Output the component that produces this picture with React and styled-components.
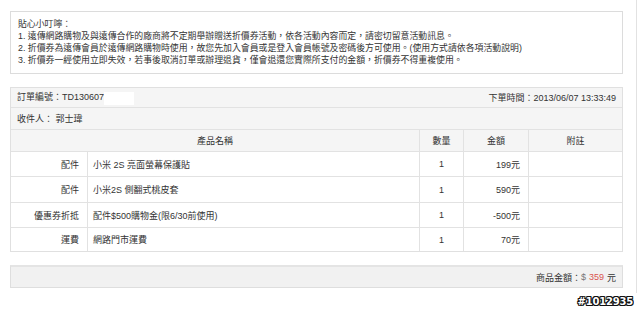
import React from "react";
import styled, { createGlobalStyle } from "styled-components";

const GlobalStyle = createGlobalStyle`
  html, body {
    margin: 0;
    padding: 0;
    background: #ffffff;
  }
  body {
    font-family: "Liberation Sans", "Noto Sans CJK TC", sans-serif;
    color: #333333;
  }
`;

const Screen = styled.div`
  position: relative;
  width: 640px;
  height: 311px;
  overflow: hidden;
`;

const Page = styled.div`
  box-sizing: border-box;
  width: 637px;
  padding: 11px 13px 5px 10px;
  border-right: 1px solid #e2e2e2;
  display: flex;
  flex-direction: column;
`;

const Notice = styled.div`
  border: 1px solid #dcdcdc;
  padding: 6px 7px 7px;
  font-size: 8.9px;
  line-height: 12px;
  color: #333333;
`;

const NoticeLine = styled.div`
  white-space: nowrap;
`;

const OrderTable = styled.div`
  margin-top: 13px;
  border: 1px solid #e0e0e0;
  font-size: 9px;
  color: #333333;
`;

const InfoRow = styled.div`
  display: flex;
  align-items: center;
  justify-content: space-between;
  height: ${(p) => p.$h}px;
  padding: 0 6px 0 6px;
  background: #f5f5f5;
  border-bottom: 1px solid #e2e2e2;
`;

const Label = styled.span`
  white-space: nowrap;
`;

const Redacted = styled.span`
  display: inline-block;
  width: 30px;
  height: 13px;
  background: #ffffff;
  vertical-align: middle;
`;

const GridRow = styled.div`
  display: grid;
  grid-template-columns: 76px 332px 44px 65px 1fr;
  height: ${(p) => p.$h}px;
  background: ${(p) => (p.$head ? "#f5f5f5" : "#ffffff")};
  border-bottom: ${(p) => (p.$last ? "none" : "1px solid #e2e2e2")};
`;

const Cell = styled.div`
  display: flex;
  align-items: center;
  justify-content: ${(p) =>
    p.$align === "right" ? "flex-end" : p.$align === "center" ? "center" : "flex-start"};
  padding: 0 ${(p) => (p.$align === "right" ? "8px" : "5px")};
  border-left: ${(p) => (p.$first ? "none" : "1px solid #e2e2e2")};
  grid-column: ${(p) => (p.$span ? `span ${p.$span}` : "auto")};
  white-space: nowrap;
  overflow: hidden;
`;

const TotalBar = styled.div`
  margin-top: 13px;
  height: 20px;
  border: 1px solid #dedede;
  border-top: 2px solid #e4e4e4;
  background: #f1f1f1;
  display: flex;
  align-items: center;
  justify-content: flex-end;
  padding-right: 6px;
  font-size: 9px;
  color: #333333;
`;

const Dollar = styled.span`
  color: #777777;
  margin-right: 3px;
`;

const Amount = styled.span`
  color: #d9534f;
  margin-right: 3px;
`;

const Watermark = styled.div`
  position: absolute;
  right: 7px;
  top: 296px;
  font-family: "DejaVu Sans", sans-serif;
  font-weight: bold;
  font-size: 10px;
  letter-spacing: -0.2px;
  color: #ffffff;
  text-shadow:
    -1px -1px 0 #111, 1px -1px 0 #111, -1px 1px 0 #111, 1px 1px 0 #111,
    0 -1px 0 #111, 0 1px 0 #111, -1px 0 0 #111, 1px 0 0 #111;
`;

const notes = [
  "1. 遠傳網路購物及與遠傳合作的廠商將不定期舉辦贈送折價券活動，依各活動內容而定，請密切留意活動訊息。",
  "2. 折價券為遠傳會員於遠傳網路購物時使用，故您先加入會員或是登入會員帳號及密碼後方可使用。(使用方式請依各項活動說明)",
  "3. 折價券一經使用立即失效，若事後取消訂單或辦理退貨，僅會退還您實際所支付的金額，折價券不得重複使用。",
];

const items = [
  { type: "配件", name: "小米 2S 亮面螢幕保護貼", qty: 1, price: "199元", h: 24 },
  { type: "配件", name: "小米2S 側翻式桃皮套", qty: 1, price: "590元", h: 25 },
  { type: "優惠券折抵", name: "配件$500購物金(限6/30前使用)", qty: 1, price: "-500元", h: 24 },
  { type: "運費", name: "網路門市運費", qty: 1, price: "70元", h: 23 },
];

export default function App() {
  return (
    <>
      <GlobalStyle />
      <Screen>
        <Page>
          <Notice>
            <NoticeLine>貼心小叮嚀：</NoticeLine>
            {notes.map((n) => (
              <NoticeLine key={n}>{n}</NoticeLine>
            ))}
          </Notice>

          <OrderTable>
            <InfoRow $h={19}>
              <Label>
                訂單編號：TD130607
                <Redacted />
              </Label>
              <Label>下單時間：2013/06/07 13:33:49</Label>
            </InfoRow>
            <InfoRow $h={21}>
              <Label>收件人： 郭士瑋</Label>
            </InfoRow>
            <GridRow $h={21} $head>
              <Cell $first $span={2} $align="center">
                產品名稱
              </Cell>
              <Cell $align="center">數量</Cell>
              <Cell $align="center">金額</Cell>
              <Cell $align="center">附註</Cell>
            </GridRow>
            {items.map((it, i) => (
              <GridRow key={it.name} $h={it.h} $last={i === items.length - 1}>
                <Cell $first $align="right">
                  {it.type}
                </Cell>
                <Cell>{it.name}</Cell>
                <Cell $align="center">{it.qty}</Cell>
                <Cell $align="right">{it.price}</Cell>
                <Cell />
              </GridRow>
            ))}
          </OrderTable>

          <TotalBar>
            商品金額：<Dollar>$</Dollar>
            <Amount>359</Amount>元
          </TotalBar>
        </Page>
        <Watermark>#1012935</Watermark>
      </Screen>
    </>
  );
}
